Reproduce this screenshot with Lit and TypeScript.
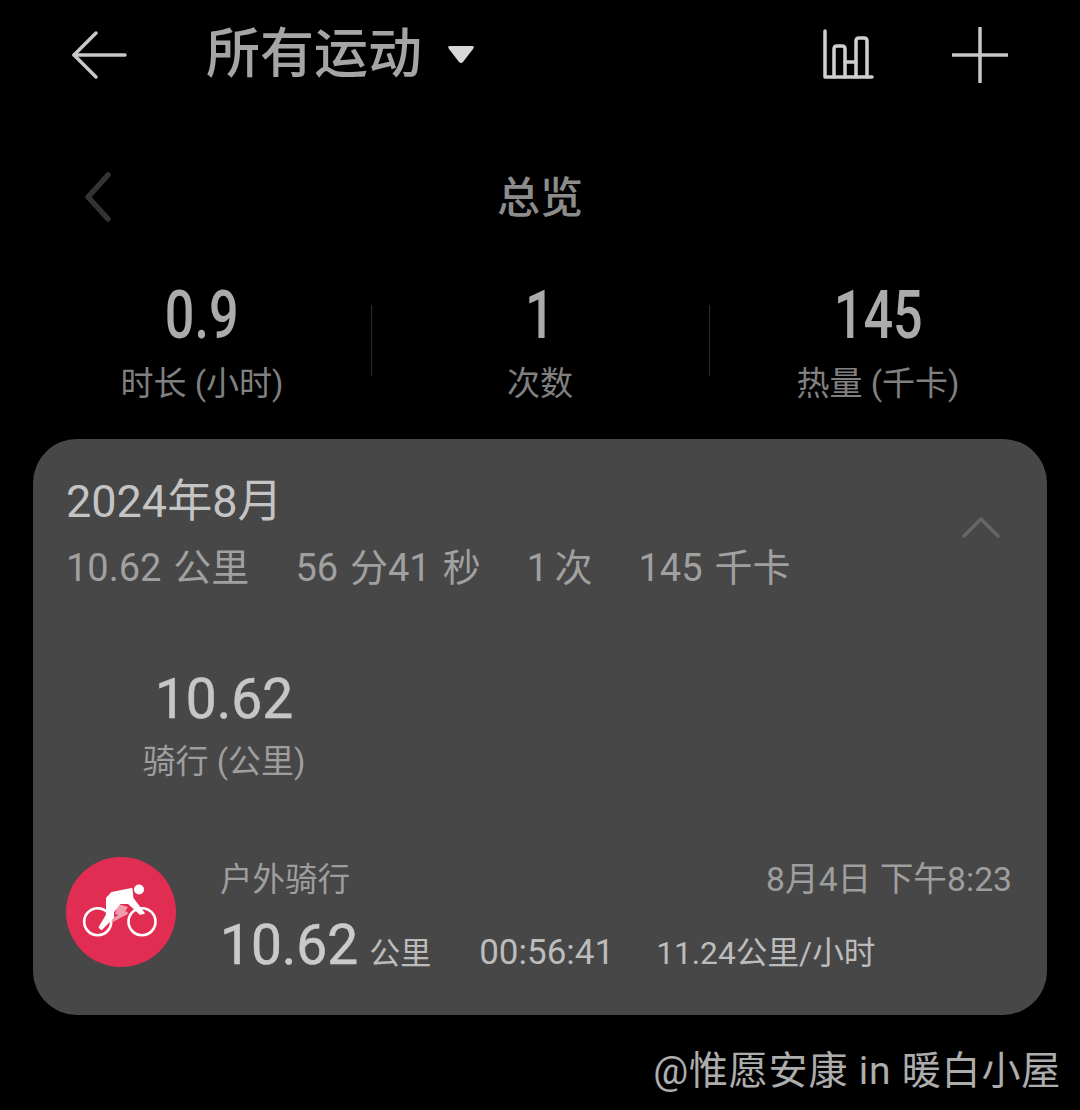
import { LitElement, html, css } from 'lit';
import { customElement } from 'lit/decorators.js';

const stats = [
  { value: '0.9', label: '时长 (小时)' },
  { value: '1', label: '次数' },
  { value: '145', label: '热量 (千卡)' },
];

@customElement('app-root')
export class AppRoot extends LitElement {
  static styles = css`
    :host {
      display: block;
      width: 1080px;
      height: 1110px;
      overflow: hidden;
      background: #000;
      color: #a8a8a8;
      font-family: 'Roboto', 'Noto Sans CJK SC', sans-serif;
      position: relative;
    }
    svg {
      display: block;
      flex: none;
    }
    .top {
      height: 110px;
      display: flex;
      align-items: center;
      padding: 0 72px 0 70px;
    }
    .top-title {
      margin-left: 78px;
      font-size: 54px;
      line-height: 110px;
      font-weight: 500;
      color: #a5a5a5;
    }
    .caret {
      margin-left: 25px;
    }
    .top-actions {
      margin-left: auto;
      display: flex;
      align-items: center;
      gap: 78px;
    }
    .overview {
      height: 100px;
      margin-top: 34px;
      padding: 0 80px;
      display: grid;
      grid-template-columns: 40px 1fr 40px;
      align-items: center;
    }
    .overview-back {
      margin: 6px 0 0 2px;
    }
    .overview-title {
      text-align: center;
      font-size: 43px;
      font-weight: 500;
      color: #8c8c8c;
    }
    .stats {
      margin-top: 36px;
      display: grid;
      grid-template-columns: 338px 338px 338px;
      padding: 0 33px;
      height: 159px;
    }
    .stat {
      display: flex;
      flex-direction: column;
      align-items: center;
      position: relative;
    }
    .stat + .stat::before {
      content: '';
      position: absolute;
      left: 0;
      top: 25px;
      width: 1px;
      height: 71px;
      background: #2c2c2c;
    }
    .stat-value {
      font-size: 66px;
      line-height: 70px;
      font-weight: 500;
      color: #ababab;
      transform: scaleX(0.79);
      margin-top: 1px;
    }
    .stat-label {
      font-size: 33px;
      line-height: 44px;
      color: #808080;
      margin-top: 11px;
    }
    .card {
      margin: 0 33px;
      height: 576px;
      border-radius: 44px;
      background: #474747;
      padding: 0 35px 0 33px;
      box-sizing: border-box;
      display: flex;
      flex-direction: column;
    }
    .month-row {
      display: flex;
      justify-content: space-between;
      align-items: flex-start;
      height: 162px;
    }
    .month {
      font-size: 45px;
      line-height: 50px;
      margin-top: 38px;
      color: #c4c4c4;
    }
    .summary {
      display: flex;
      gap: 46px;
      font-size: 38px;
      line-height: 44px;
      margin-top: 19px;
      word-spacing: 2.5px;
      color: #a0a0a0;
    }
    .summary .tight {
      word-spacing: -3px;
    }
    .chevron {
      margin-right: 12px;
      margin-top: 77px;
    }
    .total {
      width: 316px;
      margin-top: 68px;
      display: flex;
      flex-direction: column;
      align-items: center;
    }
    .total-value {
      font-size: 55px;
      line-height: 60px;
      -webkit-text-stroke: 0.6px #c6c6c6;
      color: #c6c6c6;
    }
    .total-label {
      font-size: 33px;
      line-height: 44px;
      color: #9e9e9e;
      margin-top: 11px;
    }
    .record {
      margin-top: 73px;
      display: flex;
      gap: 44px;
    }
    .record-main {
      flex: 1;
      display: flex;
      flex-direction: column;
      margin-top: 1px;
    }
    .record-top {
      display: flex;
      justify-content: space-between;
      font-size: 32.5px;
      line-height: 44px;
      color: #9e9e9e;
    }
    .record-date {
      font-size: 33.7px;
    }
    .record-bottom {
      display: flex;
      align-items: baseline;
      margin-top: 12px;
      font-size: 31.7px;
      color: #bcbcbc;
    }
    .distance {
      font-size: 55px;
      line-height: 62px;
      -webkit-text-stroke: 0.6px #cacaca;
      color: #cacaca;
    }
    .unit {
      margin-left: 11px;
      font-size: 31px;
    }
    .duration {
      margin-left: 48px;
      font-size: 35px;
    }
    .speed {
      margin-left: 42px;
    }
    .watermark {
      position: absolute;
      right: 19px;
      top: 1047px;
      font-size: 39px;
      line-height: 48px;
      color: #adadad;
      letter-spacing: 0.8px;
    }
  `;

  render() {
    return html`
      <div class="top">
        <svg width="58" height="52" viewBox="0 0 58 52" fill="none" stroke="#c8c8c8" stroke-width="3.5" stroke-linecap="round" stroke-linejoin="round">
          <path d="M55 26 H4" />
          <path d="M26 4 L4 26 L26 48" />
        </svg>
        <div class="top-title">所有运动</div>
        <svg class="caret" width="28" height="20" viewBox="0 0 28 20" fill="#d8d8d8">
          <path d="M3 1 H25 Q28 1 26 4 L16 17 Q14 19 12 17 L2 4 Q0 1 3 1 Z" />
        </svg>
        <div class="top-actions">
          <svg width="52" height="52" viewBox="0 0 52 52" fill="none" stroke="#cfcfcf" stroke-width="3.5" stroke-linecap="round" stroke-linejoin="round">
            <path d="M3 2 V48 H50" />
            <path d="M12 48 V20 Q12 17 15 17 H20 Q23 17 23 20 V48" />
            <path d="M23 33 H34 V48" />
            <path d="M34 33 V12 Q34 9 37 9 H42 Q45 9 45 12 V48" />
          </svg>
          <svg width="56" height="56" viewBox="0 0 56 56" fill="none" stroke="#c8c8c8" stroke-width="3.5" stroke-linecap="round">
            <path d="M28 1 V55" />
            <path d="M1 28 H55" />
          </svg>
        </div>
      </div>

      <div class="overview">
        <svg class="overview-back" width="30" height="50" viewBox="0 0 30 50" fill="none" stroke="#333" stroke-width="5.5" stroke-linecap="round" stroke-linejoin="round">
          <path d="M26 3 L6 25 L26 47" />
        </svg>
        <div class="overview-title">总览</div>
        <div></div>
      </div>

      <div class="stats">
        ${stats.map(
          (s) => html`
            <div class="stat">
              <div class="stat-value">${s.value}</div>
              <div class="stat-label">${s.label}</div>
            </div>
          `
        )}
      </div>

      <div class="card">
        <div class="month-row">
          <div>
            <div class="month">2024年8月</div>
            <div class="summary">
              <span>10.62 公里</span>
              <span>56 分41 秒</span>
              <span class="tight">1 次</span>
              <span>145 千卡</span>
            </div>
          </div>
          <svg class="chevron" width="38" height="22" viewBox="0 0 38 22" fill="none" stroke="#666" stroke-width="3.5" stroke-linecap="round" stroke-linejoin="round">
            <path d="M2 20 L19 3 L36 20" />
          </svg>
        </div>

        <div class="total">
          <div class="total-value">10.62</div>
          <div class="total-label">骑行 (公里)</div>
        </div>

        <div class="record">
          <svg width="110" height="110" viewBox="0 0 110 110">
            <circle cx="55" cy="55" r="55" fill="#e22d52" />
            <g fill="none" stroke="#fff" stroke-width="2.6">
              <circle cx="31.7" cy="64.7" r="13.5" />
              <circle cx="76" cy="64.7" r="13.5" />
            </g>
            <path d="M52 47 L62 50 L56 59 L49 57 Z" fill="#f29bad" />
            <path d="M47 63 L60 56" stroke="#f29bad" stroke-width="3.5" stroke-linecap="round" />
            <circle cx="73" cy="32.5" r="5" fill="#fff" />
            <path d="M45.7 35.7 L65.7 31.7 L66.7 41.3 L78 56.3 L74 57 L62.3 46.3 L54 46.3 L47.3 54.7 L47.3 60.3 L35.7 72.3 L33.3 70.3 L40.7 58 L40.7 41.3 Z" fill="#fff" stroke="#fff" stroke-width="1.5" stroke-linejoin="round" />
          </svg>
          <div class="record-main">
            <div class="record-top">
              <span>户外骑行</span>
              <span class="record-date">8月4日 下午8:23</span>
            </div>
            <div class="record-bottom">
              <span class="distance">10.62</span>
              <span class="unit">公里</span>
              <span class="duration">00:56:41</span>
              <span class="speed">11.24公里/小时</span>
            </div>
          </div>
        </div>
      </div>

      <div class="watermark">@惟愿安康 in 暖白小屋</div>
    `;
  }
}
